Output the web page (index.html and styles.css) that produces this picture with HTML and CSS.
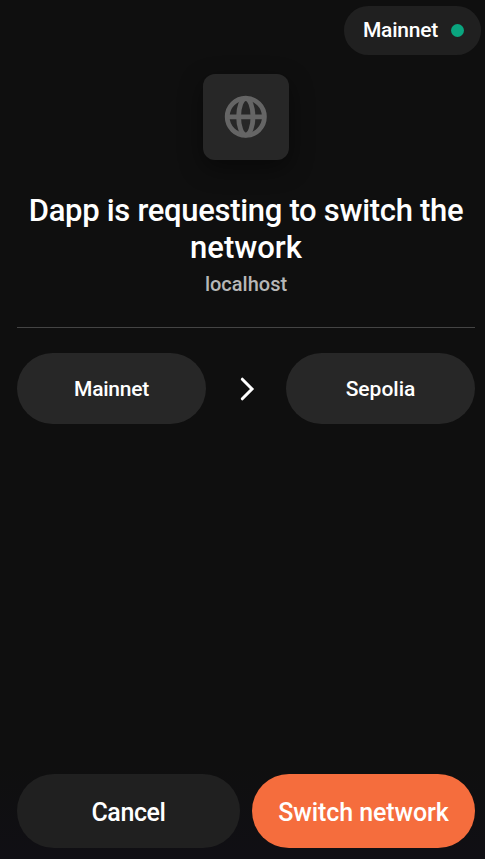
FILE: index.html
```html
<!DOCTYPE html>
<html lang="en">
<head>
<meta charset="utf-8">
<title>Switch network</title>
<link rel="stylesheet" href="styles.css">
</head>
<body>
<header class="topbar">
  <div class="status"><span class="status-name">Mainnet</span><span class="dot"></span></div>
</header>
<main class="request">
  <div class="app-icon">
    <svg width="44" height="44" viewBox="0 0 44 44" fill="none" stroke="#656565" stroke-width="4.8"><circle cx="21.8" cy="21.8" r="18.6"/><ellipse cx="21.8" cy="21.8" rx="7.2" ry="18.2"/><path d="M3.5 21.8h37"/></svg>
  </div>
  <h1 class="title"><span class="title-first">Dapp is requesting to switch the</span> <span class="title-last">network</span></h1>
  <p class="origin"><span>localhost</span></p>
  <div class="networks">
    <div class="network"><span class="from">Mainnet</span></div>
    <svg class="arrow" width="20" height="28" viewBox="0 0 20 28" fill="none" stroke="#fff" stroke-width="3" stroke-linecap="round" stroke-linejoin="miter"><path d="M6.3 4.2 16 14 6.3 23.8"/></svg>
    <div class="network"><span class="to">Sepolia</span></div>
  </div>
</main>
<footer class="actions">
  <button class="button cancel"><span>Cancel</span></button>
  <button class="button confirm"><span>Switch network</span></button>
</footer>
</body>
</html>
```

FILE: styles.css
```css
* { box-sizing: border-box; }
body {
  margin: 0;
  height: 859px;
  display: flex;
  flex-direction: column;
  overflow: hidden;
  background: linear-gradient(#0f0f0f 765px, #100f14 859px);
  color: #fff;
  font-family: Roboto, "Liberation Sans", sans-serif;
  font-weight: 500;
}
.topbar {
  display: flex;
  justify-content: flex-end;
  padding: 6px 4px 0 0;
}
.status {
  width: 137px;
  height: 49px;
  padding: 0 17px 0 19px;
  border-radius: 25px;
  background: #202020;
  display: flex;
  align-items: center;
  justify-content: space-between;
  font-size: 21px;
}
.status-name { position: relative; top: -1px; letter-spacing: -.25px; }
.dot {
  width: 13px;
  height: 13px;
  border-radius: 50%;
  background: #0aa57f;
}
.request {
  flex: 1;
  padding: 19px 10px 0 17px;
  display: flex;
  flex-direction: column;
  align-items: center;
}
.app-icon {
  width: 86px;
  height: 86px;
  border-radius: 12px;
  background: #272727;
  box-shadow: 0 8px 24px rgba(0, 0, 0, .45);
  display: flex;
  align-items: center;
  justify-content: center;
}
.title {
  margin: 32px 0 0;
  font-size: 31px;
  line-height: 37px;
  font-weight: 500;
  text-align: center;
}
.title span { display: block; white-space: nowrap; }
.title-first { letter-spacing: -.3px; }
.origin {
  margin: 4px 0 0;
  font-size: 20px;
  line-height: 28px;
  color: #b7b7b7;
}
.networks {
  width: 100%;
  margin-top: 29px;
  padding-top: 25px;
  border-top: 1px solid #444;
  display: flex;
  align-items: center;
  justify-content: space-between;
}
.network {
  width: 189px;
  height: 71px;
  border-radius: 36px;
  background: #272727;
  display: flex;
  align-items: center;
  justify-content: center;
  font-size: 21px;
}
.from { letter-spacing: -.25px; }
.actions {
  display: flex;
  gap: 12px;
  padding: 0 10px 11px 17px;
}
.button {
  flex: 1;
  height: 74px;
  padding: 0;
  border: 0;
  border-radius: 37px;
  color: #fff;
  font: 500 25px Roboto, "Liberation Sans", sans-serif;
}
.button span { position: relative; top: 1px; }
.cancel { background: #202020; letter-spacing: -.4px; }
.confirm { background: #f56d3d; letter-spacing: -.1px; }
```
